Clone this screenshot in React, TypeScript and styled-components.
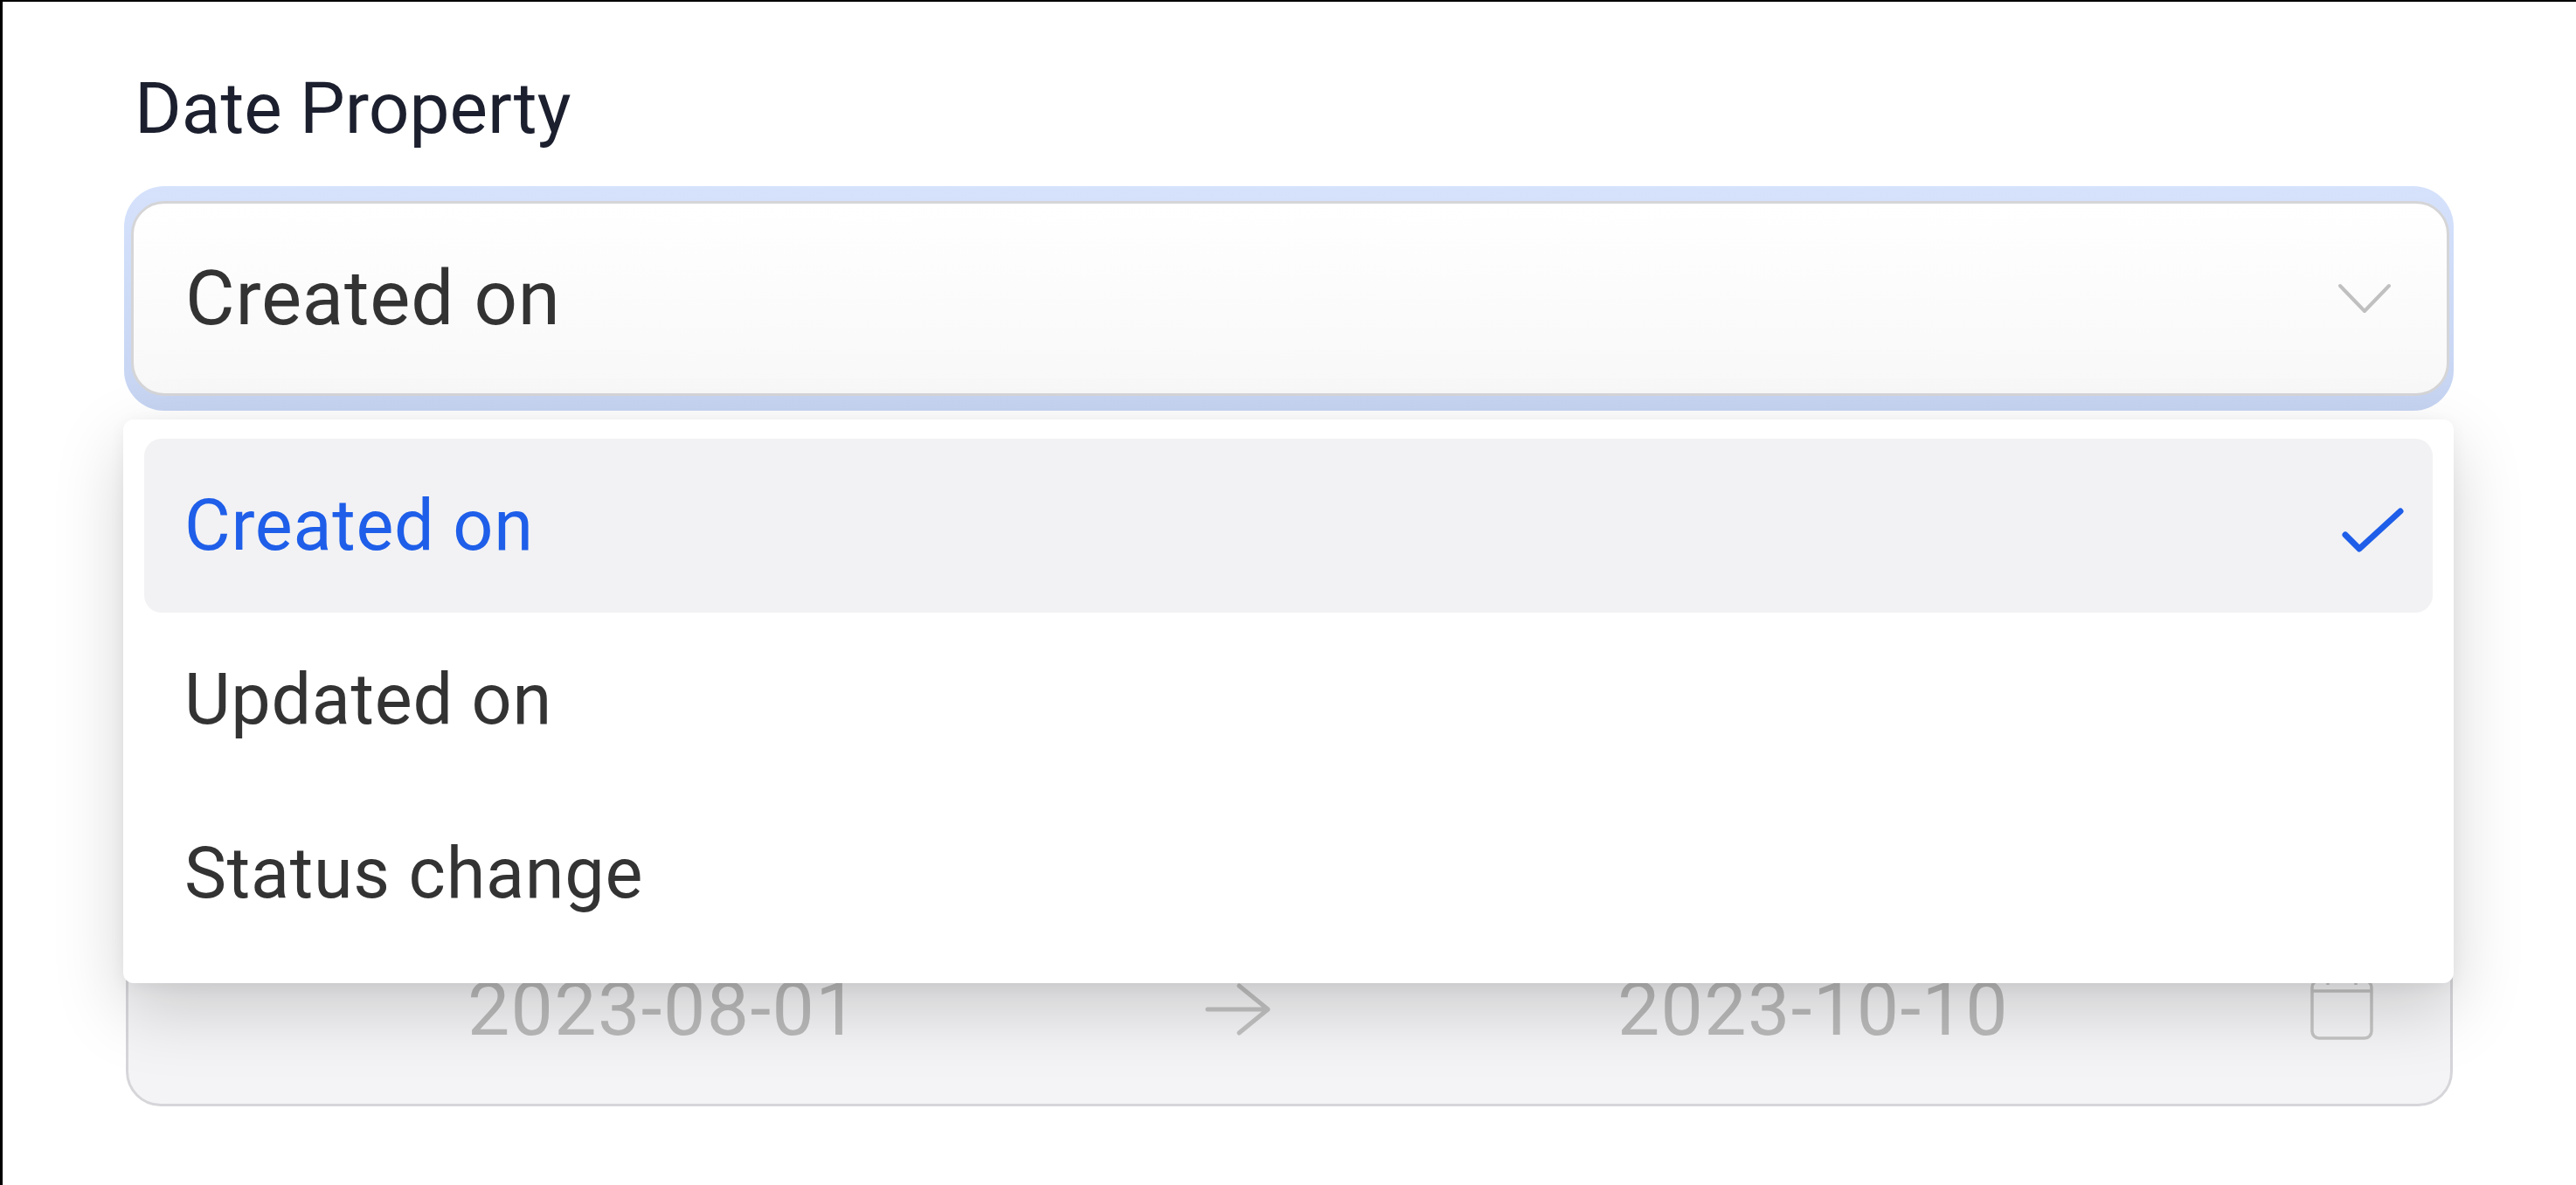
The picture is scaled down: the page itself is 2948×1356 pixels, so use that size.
import styled, { createGlobalStyle } from 'styled-components'

const GlobalStyle = createGlobalStyle`
  html, body {
    margin: 0;
    background: #ffffff;
  }
  body {
    font-family: Roboto, 'Noto Sans', Arial, sans-serif;
  }
  * {
    box-sizing: border-box;
  }
`

const Frame = styled.div`
  width: 2948px;
  height: 1356px;
  overflow: hidden;
  border-left: 3px solid #000;
  border-top: 2px solid #000;
  padding: 73px 140px 0 139px;
  background: #fff;
`

const Label = styled.div`
  margin: 0 0 40px 12px;
  font-size: 82px;
  line-height: 98px;
  color: #1b1f2e;
`

const SelectWrap = styled.div`
  position: relative;
`

const FocusRing = styled.div`
  padding: 17px 5px 17px 8px;
  border-radius: 46px;
  background: linear-gradient(#d6e2fc, #c6d4f2);
`

const SelectBox = styled.div`
  height: 223px;
  display: flex;
  align-items: center;
  justify-content: space-between;
  padding: 0 63px 0 59px;
  border: 3px solid #d5d5d7;
  border-radius: 38px;
  background: linear-gradient(#ffffff, #f8f8f9);
`

const SelectValue = styled.span`
  font-size: 87px;
  line-height: 1;
  letter-spacing: 0.8px;
  color: #333333;
`

const Menu = styled.div`
  position: absolute;
  top: calc(100% + 10px);
  left: -1px;
  right: 0;
  z-index: 2;
  padding: 22px 24px 26px;
  border-radius: 12px;
  background: #fff;
  box-shadow: 0 30px 80px rgba(0, 0, 0, 0.17), 0 4px 18px rgba(0, 0, 0, 0.05);
`

const MenuItem = styled.div<{ $selected?: boolean }>`
  height: 199px;
  display: flex;
  align-items: center;
  justify-content: space-between;
  padding: 0 33px 0 46px;
  border-radius: 20px;
  font-size: 81px;
  line-height: 1;
  letter-spacing: 0.7px;
  color: ${p => (p.$selected ? '#1e5ee9' : '#333333')};
  background: ${p => (p.$selected ? '#f2f2f4' : 'transparent')};
`

const DateField = styled.div`
  position: relative;
  z-index: 1;
  height: 223px;
  margin: 573px 1px 0 2px;
  display: flex;
  align-items: center;
  padding: 0 88px 0 71px;
  border: 3px solid #d6d6da;
  border-radius: 40px;
  background: #f4f4f6;
`

const DateText = styled.div`
  flex: 1;
  text-align: center;
  font-size: 86px;
  line-height: 1;
  letter-spacing: 1.4px;
  color: #bababa;
`

const ArrowIcon = styled.svg`
  flex: none;
  margin: 0 79px 0 79px;
`

const CalendarIcon = styled.svg`
  flex: none;
  margin-left: 28px;
`

const Chevron = () => (
  <svg width='62' height='38' viewBox='0 0 62 38' fill='none'>
    <path d='M3 4 L31 33 L59 4' stroke='#c0c0c0' strokeWidth='4' strokeLinecap='round' strokeLinejoin='round' />
  </svg>
)

const Check = () => (
  <svg width='80' height='70' viewBox='0 0 80 70' fill='none'>
    <polyline points='13,45 29,61 76,18' stroke='#1e5ee9' strokeWidth='7' strokeLinecap='round' strokeLinejoin='round' />
  </svg>
)

const options = ['Created on', 'Updated on', 'Status change']

const App = () => {
  const value = 'Created on'

  return (
    <>
      <GlobalStyle />
      <Frame>
        <Label>Date Property</Label>

        <SelectWrap>
          <FocusRing>
            <SelectBox>
              <SelectValue>{value}</SelectValue>
              <Chevron />
            </SelectBox>
          </FocusRing>

          <Menu>
            {options.map(o => (
              <MenuItem key={o} $selected={o === value}>
                <span>{o}</span>
                {o === value && <Check />}
              </MenuItem>
            ))}
          </Menu>
        </SelectWrap>

        <DateField>
          <DateText>2023-08-01</DateText>
          <ArrowIcon width='76' height='64' viewBox='0 0 76 64' fill='none'>
            <path d='M3 32 H72 M39 5 L72 32 L39 59' stroke='#c2c2c2' strokeWidth='5' strokeLinecap='round' strokeLinejoin='round' />
          </ArrowIcon>
          <DateText>2023-10-10</DateText>
          <CalendarIcon width='72' height='74' viewBox='0 0 72 74' fill='none'>
            <rect x='2' y='4' width='68' height='66' rx='8' stroke='#c4c4c4' strokeWidth='3.5' />
            <path d='M2 16 H70 M20 0 V9 M52 0 V9' stroke='#c4c4c4' strokeWidth='3.5' />
          </CalendarIcon>
        </DateField>
      </Frame>
    </>
  )
}

export default App
